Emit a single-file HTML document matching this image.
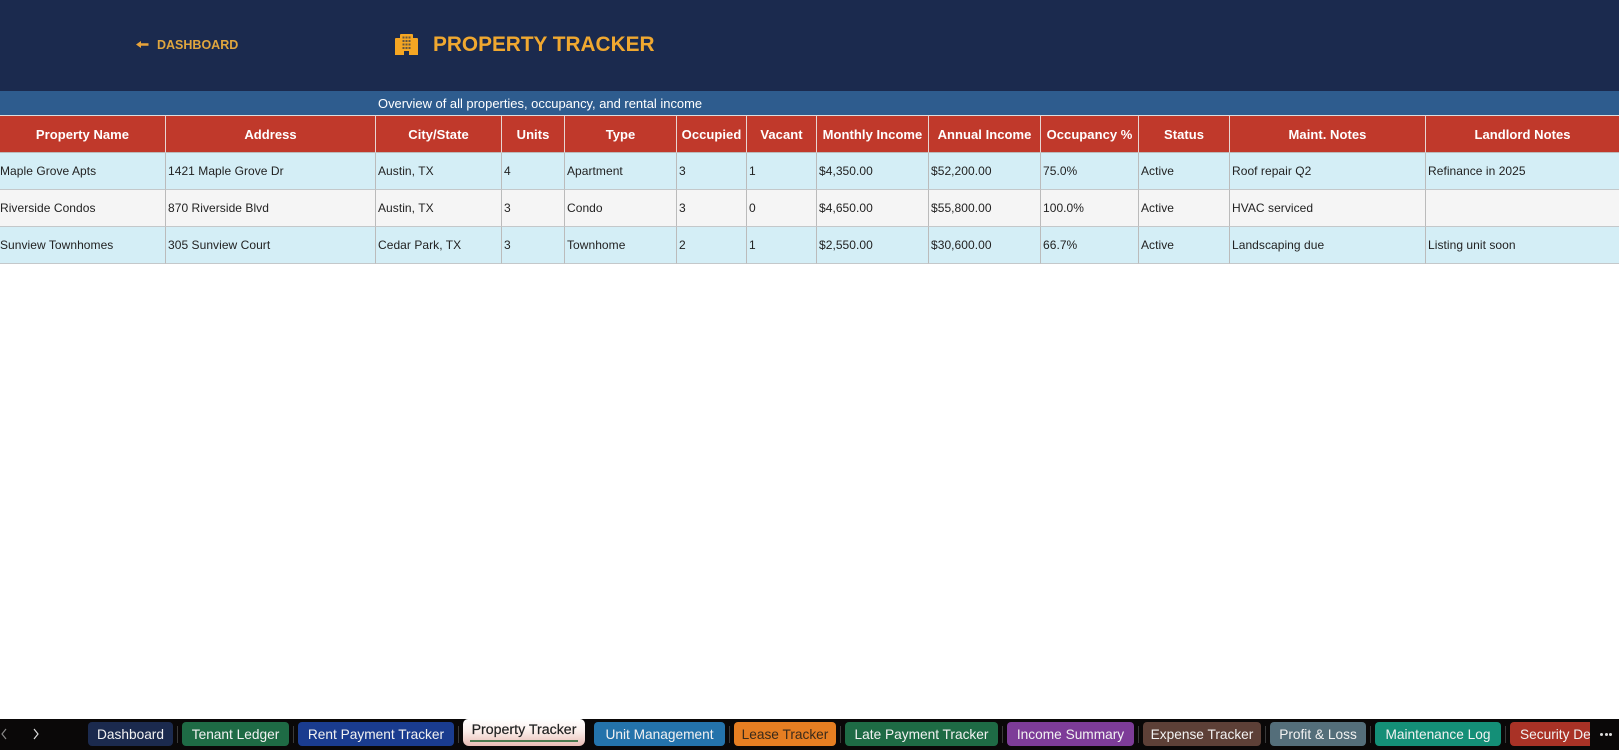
<!DOCTYPE html>
<html><head><meta charset="utf-8"><style>
html,body{margin:0;padding:0;background:#fff;width:1619px;height:750px;overflow:hidden;font-family:"Liberation Sans",sans-serif}
.a{position:absolute;white-space:nowrap}
table{position:absolute;left:0;top:115px;border-collapse:separate;border-spacing:0;table-layout:fixed;width:1619px}
th,td{box-sizing:border-box;padding:0;overflow:hidden;white-space:nowrap}
th{height:38px;background:#c0392b;color:#fff;font-size:13px;font-weight:bold;text-align:center;border-left:1px solid #e8d5d2;border-top:1px solid #ddd;border-bottom:1px solid #bbb;letter-spacing:.05px}
td{font-size:12px;color:#222;padding-left:2px;border-left:1px solid #bbb;border-bottom:1px solid #c4c8ca;letter-spacing:.05px}
th:first-child,td:first-child{border-left:0}
td:first-child{padding-left:0}
.o td{background:#d4eef6}.e td{background:#f5f5f5}
#bar{position:absolute;left:0;top:719px;width:1619px;height:31px;background:#0a0808;overflow:hidden}
.t{position:absolute;top:3px;height:24px;line-height:25px;border-radius:4px;text-align:center;color:#f2f2f2;font-size:13.7px;white-space:nowrap;overflow:hidden}
.s{position:absolute;top:7px;width:1px;height:17px;background:#3a3a3a}
</style></head><body>
<div class="a" style="left:0;top:0;width:1619px;height:91px;background:#1b2a4e"></div>
<svg class="a" style="left:136px;top:39px" width="13" height="11" viewBox="0 0 13 11"><path d="M0 5.5 L5 2 V4.3 H12.5 V6.7 H5 V9 Z" fill="#e8a33a"/></svg>
<div class="a" style="left:157px;top:37px;font-size:12.5px;line-height:17px;color:#e0a63e;font-weight:bold">DASHBOARD</div>
<svg class="a" style="left:395px;top:34px" width="23" height="21" viewBox="0 0 23 21"><path fill="#f5a623" d="M5 1 Q5 0 6 0 H17 Q18 0 18 1 V4 H22 Q23 4 23 5 V21 H14 V17 H9 V21 H0 V5 Q0 4 1 4 H5 Z"/><g fill="#1b2a4e" opacity=".65"><rect x="7.5" y="2.5" width="2" height="2"/><rect x="10.5" y="2.5" width="2" height="2"/><rect x="13.5" y="2.5" width="2" height="2"/><rect x="7.5" y="6" width="2" height="2"/><rect x="10.5" y="6" width="2" height="2"/><rect x="13.5" y="6" width="2" height="2"/><rect x="7.5" y="9.5" width="2" height="2"/><rect x="10.5" y="9.5" width="2" height="2"/><rect x="13.5" y="9.5" width="2" height="2"/><rect x="7.5" y="13" width="2" height="2"/><rect x="10.5" y="13" width="2" height="2"/><rect x="13.5" y="13" width="2" height="2"/></g></svg>
<div class="a" style="left:433px;top:31px;font-size:20.8px;line-height:27px;color:#f0a830;font-weight:bold">PROPERTY TRACKER</div>
<div class="a" style="left:0;top:91px;width:1619px;height:24px;background:#2e5c8e"></div>
<div class="a" style="left:378px;top:96px;font-size:12.95px;line-height:16px;color:#fff">Overview of all properties, occupancy, and rental income</div>
<table>
<colgroup><col style="width:165px"><col style="width:210px"><col style="width:126px"><col style="width:63px"><col style="width:112px"><col style="width:70px"><col style="width:70px"><col style="width:112px"><col style="width:112px"><col style="width:98px"><col style="width:91px"><col style="width:196px"><col style="width:194px"></colgroup>
<tr><th>Property Name</th><th>Address</th><th>City/State</th><th>Units</th><th>Type</th><th>Occupied</th><th>Vacant</th><th>Monthly Income</th><th>Annual Income</th><th>Occupancy %</th><th>Status</th><th>Maint. Notes</th><th>Landlord Notes</th></tr>
<tr class="o" style="height:36.5px"><td>Maple Grove Apts</td><td>1421 Maple Grove Dr</td><td>Austin, TX</td><td>4</td><td>Apartment</td><td>3</td><td>1</td><td>$4,350.00</td><td>$52,200.00</td><td>75.0%</td><td>Active</td><td>Roof repair Q2</td><td>Refinance in 2025</td></tr>
<tr class="e" style="height:37px"><td>Riverside Condos</td><td>870 Riverside Blvd</td><td>Austin, TX</td><td>3</td><td>Condo</td><td>3</td><td>0</td><td>$4,650.00</td><td>$55,800.00</td><td>100.0%</td><td>Active</td><td>HVAC serviced</td><td></td></tr>
<tr class="o" style="height:37px"><td>Sunview Townhomes</td><td>305 Sunview Court</td><td>Cedar Park, TX</td><td>3</td><td>Townhome</td><td>2</td><td>1</td><td>$2,550.00</td><td>$30,600.00</td><td>66.7%</td><td>Active</td><td>Landscaping due</td><td>Listing unit soon</td></tr>
</table>
<div id="bar">
<svg class="a" style="left:0;top:8px" width="8" height="14" viewBox="0 0 8 14"><path d="M6 2 L2 7 L6 12" fill="none" stroke="#888" stroke-width="1.2"/></svg>
<svg class="a" style="left:32px;top:8px" width="8" height="14" viewBox="0 0 8 14"><path d="M2 2 L6 7 L2 12" fill="none" stroke="#ddd" stroke-width="1.2"/></svg>
<div class="t" style="left:88px;width:85px;background:#1b2a4e">Dashboard</div><div class="s" style="left:177px"></div>
<div class="t" style="left:182px;width:107px;background:#1e6b45">Tenant Ledger</div><div class="s" style="left:293px"></div>
<div class="t" style="left:298px;width:156px;background:#1a3c8f">Rent Payment Tracker</div><div class="s" style="left:458px"></div>
<div class="a" style="left:463px;top:0;width:122px;height:27px;border-radius:5px 5px 6px 6px;background:linear-gradient(#fff 0%,#fbeeea 45%,#e8bcb4 100%)"></div>
<div class="a" style="left:463px;top:2px;width:122px;text-align:center;font-size:14.2px;line-height:18px;color:#222;-webkit-text-stroke:.2px #222">Property Tracker</div>
<div class="a" style="left:470px;top:21px;width:108px;height:2px;background:#4a7a4e"></div>
<div class="t" style="left:594px;width:131px;background:#2473ab">Unit Management</div><div class="s" style="left:729px"></div>
<div class="t" style="left:734px;width:102px;background:#e67e22;color:#3a2a1a">Lease Tracker</div><div class="s" style="left:840px"></div>
<div class="t" style="left:845px;width:153px;background:#1e6b45">Late Payment Tracker</div><div class="s" style="left:1002px"></div>
<div class="t" style="left:1007px;width:127px;background:#7d3c98">Income Summary</div><div class="s" style="left:1138px"></div>
<div class="t" style="left:1143px;width:118px;background:#5d4037">Expense Tracker</div><div class="s" style="left:1265px"></div>
<div class="t" style="left:1270px;width:96px;background:#546e7a">Profit &amp; Loss</div><div class="s" style="left:1370px"></div>
<div class="t" style="left:1375px;width:126px;background:#148f77">Maintenance Log</div><div class="s" style="left:1505px"></div>
<div class="t" style="left:1510px;width:80px;background:#a93226;border-radius:4px 0 0 4px;text-align:left;text-indent:10px">Security Deposit</div>
<div class="a" style="left:1600px;top:14px;width:3px;height:3px;background:#ddd;border-radius:50%"></div>
<div class="a" style="left:1604.5px;top:14px;width:3px;height:3px;background:#ddd;border-radius:50%"></div>
<div class="a" style="left:1609px;top:14px;width:3px;height:3px;background:#ddd;border-radius:50%"></div>
</div>
</body></html>
